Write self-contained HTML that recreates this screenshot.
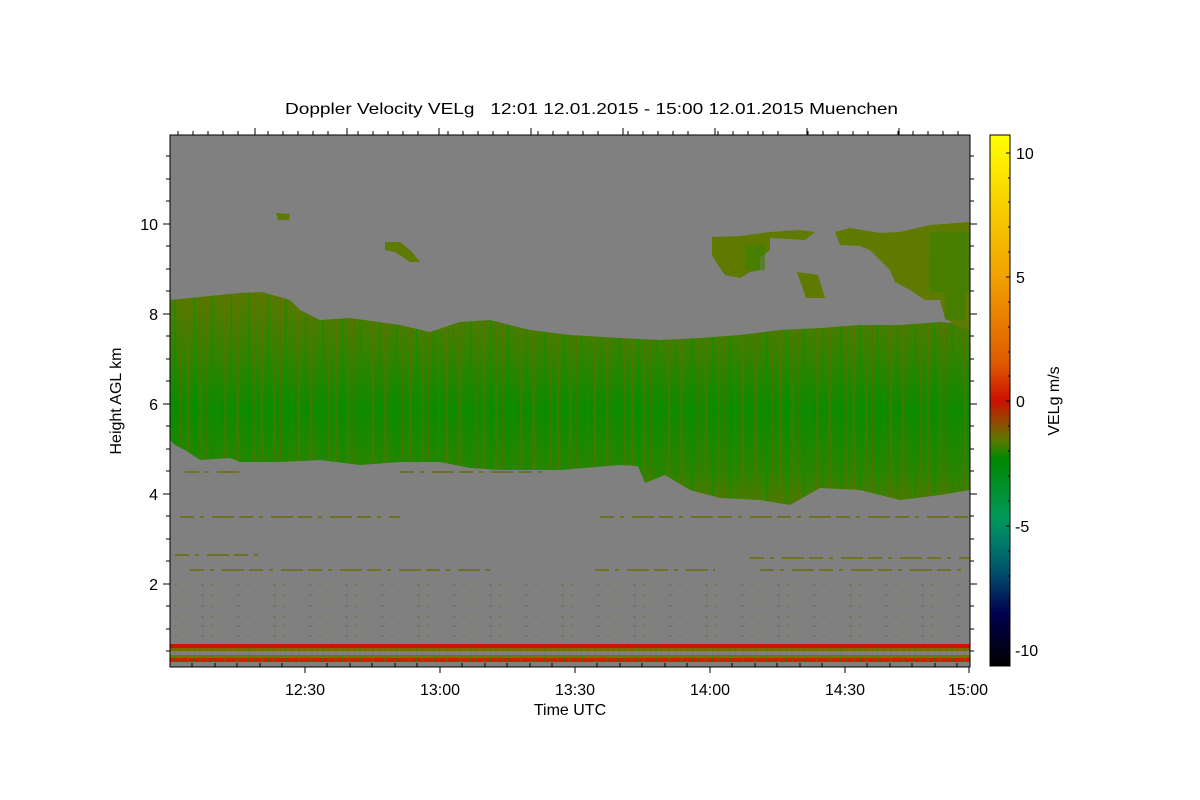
<!DOCTYPE html>
<html><head><meta charset="utf-8"><style>
html,body{margin:0;padding:0;background:#fff;}
svg{display:block;font-family:"Liberation Sans",sans-serif;}
</style></head><body>
<svg width="1200" height="800" viewBox="0 0 1200 800" xmlns="http://www.w3.org/2000/svg">
<defs>
<linearGradient id="band" x1="0" y1="0" x2="0" y2="1">
<stop offset="0" stop-color="#587800"/>
<stop offset="0.25" stop-color="#3a8000"/>
<stop offset="0.55" stop-color="#0e8a00"/>
<stop offset="0.85" stop-color="#2a8400"/>
<stop offset="1" stop-color="#4a7a00"/>
</linearGradient>
<pattern id="str" width="37" height="200" patternUnits="userSpaceOnUse">
<rect x="2" y="0" width="2" height="200" fill="#7a6400" opacity="0.45"/>
<rect x="9" y="0" width="1" height="200" fill="#009000" opacity="0.5"/>
<rect x="14" y="0" width="3" height="200" fill="#6a6a00" opacity="0.35"/>
<rect x="21" y="0" width="1" height="200" fill="#7a5a00" opacity="0.4"/>
<rect x="26" y="0" width="2" height="200" fill="#009000" opacity="0.4"/>
<rect x="32" y="0" width="1" height="200" fill="#6a6a00" opacity="0.5"/>
</pattern>
<linearGradient id="cb" x1="0" y1="0" x2="0" y2="1">
<stop offset="0" stop-color="#ffff00"/>
<stop offset="0.27" stop-color="#f0a000"/>
<stop offset="0.43" stop-color="#e05a00"/>
<stop offset="0.5" stop-color="#cc1000"/>
<stop offset="0.545" stop-color="#8a5000"/>
<stop offset="0.575" stop-color="#5a7a00"/>
<stop offset="0.61" stop-color="#008800"/>
<stop offset="0.72" stop-color="#00995a"/>
<stop offset="0.77" stop-color="#007a6a"/>
<stop offset="0.83" stop-color="#004a6a"/>
<stop offset="0.9" stop-color="#000050"/>
<stop offset="1" stop-color="#000000"/>
</linearGradient>
</defs>

<text x="285" y="114" font-size="16" xml:space="preserve" style="white-space:pre" textLength="613" lengthAdjust="spacingAndGlyphs">Doppler Velocity VELg   12:01 12.01.2015 - 15:00 12.01.2015 Muenchen</text>

<rect x="170" y="135" width="800" height="532" fill="#808080"/>

<path d="M170,300 L200,297 L240,293 L262,292 L290,300 L300,310 L320,320 L350,318 L400,325 L430,332 L460,322 L490,320 L510,325 L530,330 L570,335 L620,338 L660,340 L700,338 L740,335 L780,330 L820,328 L860,325 L900,325 L940,322 L970,325 L970,490 L940,495 L900,500 L860,490 L820,488 L790,505 L760,500 L720,498 L690,490 L665,475 L645,483 L638,466 L620,465 L560,470 L500,470 L470,468 L440,462 L400,462 L360,465 L320,460 L280,462 L240,462 L230,458 L200,460 L185,450 L175,445 L170,440 Z" fill="url(#band)"/>
<path d="M170,300 L200,297 L240,293 L262,292 L290,300 L300,310 L320,320 L350,318 L400,325 L430,332 L460,322 L490,320 L510,325 L530,330 L570,335 L620,338 L660,340 L700,338 L740,335 L780,330 L820,328 L860,325 L900,325 L940,322 L970,325 L970,490 L940,495 L900,500 L860,490 L820,488 L790,505 L760,500 L720,498 L690,490 L665,475 L645,483 L638,466 L620,465 L560,470 L500,470 L470,468 L440,462 L400,462 L360,465 L320,460 L280,462 L240,462 L230,458 L200,460 L185,450 L175,445 L170,440 Z" fill="url(#str)"/>

<g fill="#5e7a00">
<path d="M712,237 L740,236 L770,232 L800,230 L815,232 L805,240 L770,238 L770,250 L760,258 L760,270 L750,272 L740,278 L725,275 L718,265 L712,255 Z"/>
<path d="M835,232 L850,228 L880,233 L900,232 L930,225 L970,222 L970,330 L955,325 L945,318 L940,300 L925,300 L910,290 L895,282 L890,270 L880,260 L870,250 L860,246 L840,245 Z"/>
<path d="M797,272 L818,275 L825,298 L806,298 Z"/>
<path d="M385,242 L400,242 L412,252 L420,262 L410,262 L395,252 L385,250 Z"/>
<path d="M276,213 L290,214 L289,220 L278,220 Z"/>
</g>
<g fill="#3a8200" opacity="0.6">
<rect x="930" y="232" width="40" height="60"/>
<rect x="945" y="290" width="20" height="30"/>
<rect x="745" y="245" width="20" height="25"/>
</g>

<g stroke="#6a6a00" stroke-width="2" stroke-dasharray="14 6 4 8 22 5" opacity="0.7">
<path d="M185,472h60M400,472h150M180,517h220M600,517h370M190,570h300M595,570h120M760,570h210M175,555h90M750,558h220"/>
</g>
<g stroke="#7a5a00" stroke-width="1" stroke-dasharray="2 9 1 14 3 7" opacity="0.6">
<path d="M175,595h790M175,606h790M175,617h790M175,626h790M175,636h790M175,585h790"/>
</g>

<rect x="170" y="644" width="800" height="4" fill="#d01000"/>
<rect x="170" y="648" width="800" height="3" fill="#7a6a00"/>
<rect x="170" y="652" width="800" height="3" fill="#808080"/>
<rect x="170" y="655" width="800" height="3" fill="#6a7a00"/>
<rect x="170" y="658" width="800" height="4" fill="#cc2000"/>
<rect x="170" y="658" width="800" height="4" fill="url(#str)" opacity="0.8"/>
<rect x="170" y="662" width="800" height="4" fill="#808080"/>
<rect x="170" y="644" width="800" height="18" fill="url(#str)" opacity="0.35"/>

<rect x="170" y="135" width="800" height="532" fill="none" stroke="#000" stroke-width="1"/>

<g stroke="#000" stroke-width="1">
<path d="M178,135v-4M193,135v-4M208,135v-4M223,135v-4M238,135v-4M255,135v-7M268,135v-4M283,135v-4M298,135v-4M313,135v-4M328,135v-4M347,135v-7M358,135v-4M373,135v-4M388,135v-4M403,135v-4M418,135v-4M439,135v-7M448,135v-4M463,135v-4M478,135v-4M493,135v-4M508,135v-4M531,135v-7M538,135v-4M553,135v-4M568,135v-4M583,135v-4M598,135v-4M623,135v-7M628,135v-4M643,135v-4M658,135v-4M673,135v-4M688,135v-4M715,135v-7M718,135v-4M733,135v-4M748,135v-4M763,135v-4M778,135v-4M807,135v-7M808,135v-4M823,135v-4M838,135v-4M853,135v-4M868,135v-4M899,135v-7M898,135v-4M913,135v-4M928,135v-4M943,135v-4M958,135v-4"/>
<path d="M192,667v-4M215,667v-4M237,667v-4M260,667v-4M282,667v-4M305,667v6M327,667v-4M350,667v-4M372,667v-4M395,667v-4M417,667v-4M440,667v6M462,667v-4M485,667v-4M507,667v-4M530,667v-4M552,667v-4M575,667v6M597,667v-4M620,667v-4M642,667v-4M665,667v-4M687,667v-4M710,667v6M732,667v-4M755,667v-4M777,667v-4M800,667v-4M822,667v-4M845,667v6M867,667v-4M890,667v-4M912,667v-4M935,667v-4M957,667v-4M969,667v6"/>
<path d="M170,651h-4M170,629h-4M170,606h-4M170,584h-7M170,561h-4M170,539h-4M170,516h-4M170,494h-7M170,471h-4M170,449h-4M170,426h-4M170,404h-7M170,381h-4M170,359h-4M170,336h-4M170,314h-7M170,291h-4M170,269h-4M170,246h-4M170,224h-7M170,201h-4M170,179h-4M170,156h-4"/>
<path d="M970,651h4M970,629h4M970,606h4M970,584h7M970,561h4M970,539h4M970,516h4M970,494h7M970,471h4M970,449h4M970,426h4M970,404h7M970,381h4M970,359h4M970,336h4M970,314h7M970,291h4M970,269h4M970,246h4M970,224h7M970,201h4M970,179h4M970,156h4"/>
</g>

<g font-size="16" text-anchor="end">
<text x="158" y="590">2</text>
<text x="158" y="500">4</text>
<text x="158" y="410">6</text>
<text x="158" y="320">8</text>
<text x="158" y="230">10</text>
</g>
<g font-size="16" text-anchor="middle">
<text x="305" y="695">12:30</text>
<text x="440" y="695">13:00</text>
<text x="575" y="695">13:30</text>
<text x="710" y="695">14:00</text>
<text x="845" y="695">14:30</text>
<text x="968" y="695">15:00</text>
<text x="570" y="715">Time UTC</text>
</g>
<text transform="translate(121,401) rotate(-90)" font-size="16" text-anchor="middle">Height AGL km</text>

<rect x="990" y="135" width="20" height="531" fill="url(#cb)" stroke="#000" stroke-width="1"/>
<g stroke="#000">
<path d="M1010,153h-4M1010,277h-4M1010,401h-4M1010,526h-4M1010,650h-4M1010,178h-2M1010,202h-2M1010,227h-2M1010,252h-2M1010,302h-2M1010,327h-2M1010,352h-2M1010,376h-2M1010,426h-2M1010,451h-2M1010,476h-2M1010,501h-2M1010,551h-2M1010,576h-2M1010,600h-2M1010,625h-2"/>
</g>
<g font-size="16">
<text x="1016" y="159">10</text>
<text x="1016" y="283">5</text>
<text x="1016" y="407">0</text>
<text x="1015" y="532">-5</text>
<text x="1015" y="656">-10</text>
</g>
<text transform="translate(1059,401) rotate(-90)" font-size="16" text-anchor="middle">VELg m/s</text>
</svg>
</body></html>
